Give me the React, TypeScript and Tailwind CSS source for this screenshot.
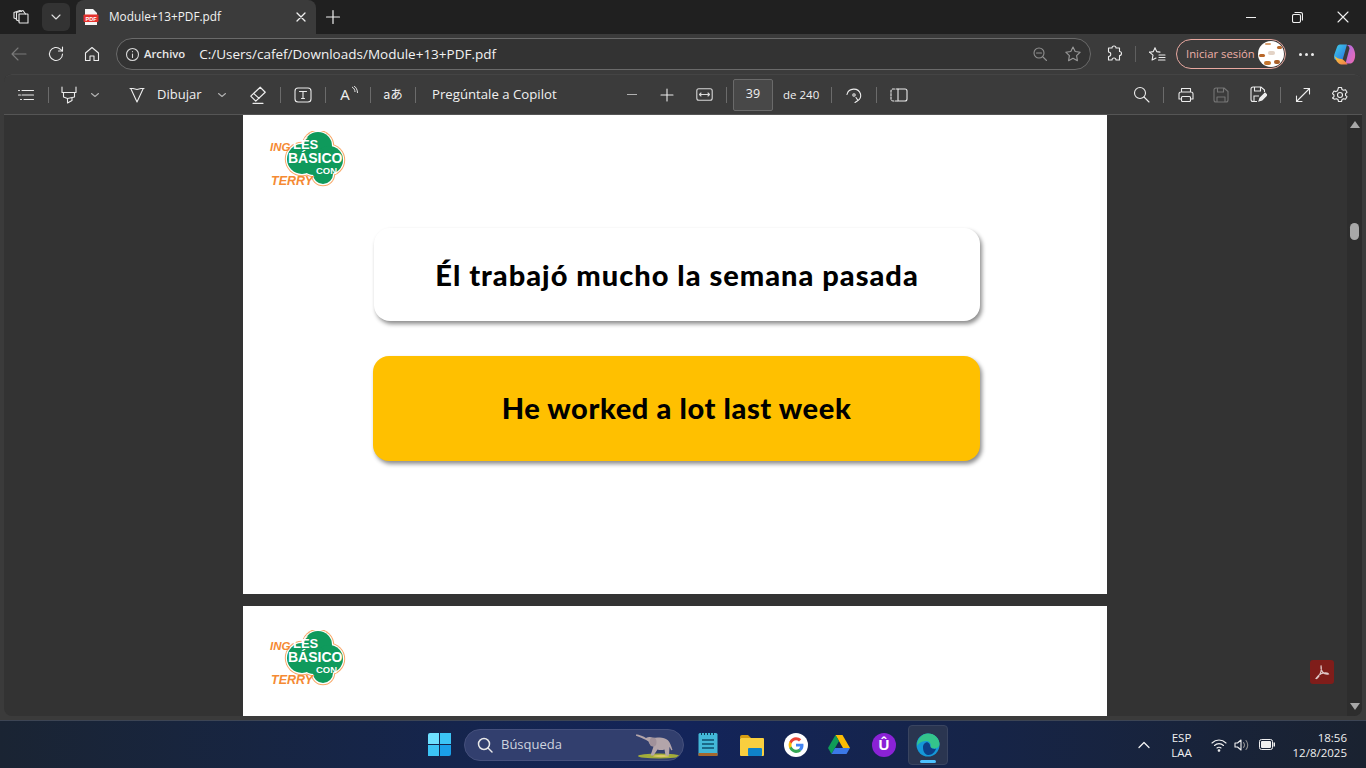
import React from "react";

const S = (p: { w?: number; h?: number; children: React.ReactNode; vb?: string; c?: string; cls?: string }) => (
  <svg width={p.w ?? 18} height={p.h ?? 18} viewBox={p.vb ?? "0 0 18 18"} fill="none" stroke={p.c ?? "#e6e6e6"} strokeWidth="1.1" strokeLinecap="round" strokeLinejoin="round" className={p.cls}>
    {p.children}
  </svg>
);

const Sep = ({ cls }: { cls: string }) => (
  <div className={`flex justify-center ${cls}`}>
    <div className="w-px h-[16px] bg-[#6b6b6b]" />
  </div>
);

const Chevron = () => (
  <S w={10} h={10} vb="0 0 10 10" c="#b0b0b0"><path d="M1.5 3.5 5 6.5l3.5-3" /></S>
);

function Logo() {
  const lobes = [
    { x: 48, y: 15, r: 14 },
    { x: 59, y: 29, r: 14 },
    { x: 53, y: 43, r: 10 },
    { x: 32, y: 28, r: 15 },
    { x: 44, y: 30, r: 14 },
  ];
  return (
    <div className="relative w-[76px] h-[58px]">
      <svg width="76" height="58" viewBox="0 0 76 58" className="absolute left-0 top-0">
        {lobes.map((l, i) => <circle key={`a${i}`} cx={l.x} cy={l.y} r={l.r + 2.2} fill="#f8a868" />)}
        {lobes.map((l, i) => <circle key={`b${i}`} cx={l.x} cy={l.y} r={l.r + 1.2} fill="#ffffff" />)}
        {lobes.map((l, i) => <circle key={`c${i}`} cx={l.x} cy={l.y} r={l.r} fill="#0f9a5c" />)}
      </svg>
      <span className="absolute left-0 top-[10px] text-[11.5px] leading-[12px] font-bold italic text-[#f58a33] font-['Liberation_Sans',sans-serif]">ING</span>
      <span className="absolute left-[23px] top-[8px] text-[13px] leading-[12px] font-bold text-white font-['Liberation_Sans',sans-serif]">LÉS</span>
      <span className="absolute left-[18px] top-[21px] text-[14px] leading-[12px] font-bold text-white font-['Liberation_Sans',sans-serif]">BÁSICO</span>
      <span className="absolute left-[46px] top-[35px] text-[9.5px] leading-[10px] font-bold text-white font-['Liberation_Sans',sans-serif]">CON</span>
      <span className="absolute left-[1px] top-[44px] text-[12.5px] leading-[13px] font-bold italic text-[#f58a33] font-['Liberation_Sans',sans-serif]">TERRY</span>
    </div>
  );
}

function Elephant() {
  return (
    <svg width="44" height="25" viewBox="0 0 44 25">
      <ellipse cx="23" cy="22" rx="21" ry="2.5" fill="#a3ad3a" />
      <ellipse cx="25" cy="22" rx="8" ry="1.2" fill="#d8c668" />
      <path d="M0 .5c3 0 8 2 10 3.500 2-1.500 5-1.500 7 0 3-.8 9-.8 13 1 3 1.500 4 4 5.500 8l1 3-1.300.2-1.700-3.500-.5 8.800h-3.500l-1-6c-2 .8-5 .8-7 0l-4 6h-3l3-9c-3-1-4.500-3-5-5-3-2-7-4-13-6z" fill="#b3a5aa" />
      <ellipse cx="17" cy="8" rx="3.500" ry="4.500" fill="#a0919a" />
    </svg>
  );
}

function Taskbar() {
  return (
    <div className="h-[48px] flex items-center bg-gradient-to-r from-[#1a2433] via-[#13245a] to-[#1a2230] relative border-t border-[#3d4554] shrink-0">
      <div className="ml-[428px] w-[23px] h-[23px] grid grid-cols-2 grid-rows-2 gap-[1px] shrink-0">
        <div className="bg-[#6ee0ff] rounded-tl-[2px]" />
        <div className="bg-[#3cc4f5]" />
        <div className="bg-[#3cc4f5]" />
        <div className="bg-[#1a9fe8] rounded-br-[2px]" />
      </div>
      <div className="ml-[13px] w-[220px] h-[32px] rounded-full bg-[#323f6e] border border-[#45507c] flex items-center relative shrink-0 overflow-hidden">
        <svg width="18" height="18" viewBox="0 0 18 18" fill="none" stroke="#e8e8e8" strokeWidth="1.5" className="ml-[11px]"><circle cx="8" cy="8" r="5.5" /><path d="M12 12l4 4" strokeLinecap="round" /></svg>
        <span className="ml-[7px] text-[13px] text-[#cfd3de] font-['Open_Sans',sans-serif]">Búsqueda</span>
        <div className="absolute right-[3px] top-[4px]"><Elephant /></div>
      </div>
      {/* notepad */}
      <div className="ml-[14px] w-[20px] shrink-0">
        <svg width="20" height="25" viewBox="0 0 20 25">
          <rect x="0.5" y="1" width="19" height="23" rx="1.5" fill="#43b7d8" />
          <rect x="0.5" y="21" width="19" height="3" fill="#a5672e" />
          <path d="M4 8h12M4 12h12M4 16h12" stroke="#0f4f6d" strokeWidth="1.5" />
          <path d="M3 2h1M6 2h1M9 2h1M12 2h1M15 2h1" stroke="#0d3c55" strokeWidth="2" />
        </svg>
      </div>
      {/* folder */}
      <div className="ml-[22px] w-[24px] shrink-0">
        <svg width="24" height="22" viewBox="0 0 24 22">
          <path d="M0 3a2 2 0 0 1 2-2h6l3 3h-11z" fill="#d79d12" />
          <rect x="0" y="4" width="24" height="18" rx="1" fill="#f9cf3f" />
          <rect x="8" y="14" width="14" height="8" rx="1" fill="#0f82c8" />
        </svg>
      </div>
      {/* google */}
      <div className="ml-[20px] w-[24px] h-[24px] rounded-full bg-white flex items-center justify-center shrink-0">
        <svg width="18" height="18" viewBox="0 0 24 24">
          <path d="M22 12.200c0-.7-.1-1.400-.2-2H12v3.900h5.600c-.2 1.300-1 2.400-2.100 3.100v2.600h3.400c2-1.800 3.100-4.500 3.100-7.600z" fill="#4285f4" />
          <path d="M12 22.500c2.800 0 5.200-.9 6.900-2.500l-3.400-2.600c-.9.600-2.100 1-3.500 1-2.700 0-5-1.800-5.800-4.300H3.200v2.700c1.700 3.400 5.100 5.700 8.800 5.700z" fill="#34a853" />
          <path d="M6.200 14.100c-.4-1.300-.4-2.800 0-4.100V7.300H3.200c-1.400 2.800-1.400 6.100 0 9z" fill="#fbbc05" />
          <path d="M12 5.600c1.500 0 2.900.5 4 1.600l3-3C17.100 2.400 14.700 1.500 12 1.500 8.300 1.500 4.900 3.700 3.200 7.300l3 2.700C7 7.400 9.300 5.600 12 5.600z" fill="#ea4335" />
        </svg>
      </div>
      {/* drive */}
      <div className="ml-[20px] w-[22px] shrink-0">
        <svg width="22" height="20" viewBox="0 0 22 20">
          <path d="M7.500 0h7l7.500 13h-7z" fill="#fbbc04" />
          <path d="M7.500 0L0 13l3.500 6 7.500-13z" fill="#0f9d58" />
          <path d="M7 13h15l-3.500 6H3.500z" fill="#3b78e7" />
        </svg>
      </div>
      {/* purple */}
      <div className="ml-[22px] w-[24px] h-[24px] rounded-full bg-[#8a22d6] flex items-center justify-center shrink-0">
        <span className="text-white font-bold text-[15px] leading-none font-['Liberation_Sans',sans-serif]">Û</span>
      </div>
      {/* edge */}
      <div className="ml-[12px] w-[40px] h-[40px] rounded-[4px] bg-[#2a3550] border border-[#394460] flex flex-col items-center justify-center relative shrink-0">
        <svg width="24" height="24" viewBox="0 0 24 24">
          <circle cx="12" cy="12" r="11.500" fill="#1598d8" />
          <path d="M12 .5C18.500 .5 23.500 5.500 23.500 11c0 3-2.500 4.500-5.500 4.500-1.500 0-3-.5-4-1.200 1.500-1.800 1-5.800-3.500-6.300C6 7.500 3 10 1 13 1 6 6 .5 12 .5z" fill="#34c48b" />
          <path d="M7 14c0-3 3-5.500 5-4.500 2 1 2 3 2.500 4.500 1 1.500 3 2.200 5.500 1.800-1 3.500-4.500 6.700-8 6.200-3.500-.5-5-4-5-8z" fill="#0c3f88" />
        </svg>
        <div className="absolute bottom-[1px] w-[16px] h-[3px] rounded-full bg-[#4cc2ff]" />
      </div>
      {/* tray */}
      <div className="ml-auto flex items-center text-[#f0f0f0] font-['Open_Sans',sans-serif] shrink-0">
        <S w={12} h={8} vb="0 0 12 8" c="#f0f0f0"><path d="M1 6.500 6 1.500l5 5" strokeWidth="1.300" /></S>
        <div className="ml-[20px] w-[24px] flex flex-col items-center text-[11.5px] leading-[15px]">
          <span>ESP</span>
          <span>LAA</span>
        </div>
        <div className="ml-[17px]">
          <S w={16} h={14} vb="0 0 16 14" c="#f0f0f0"><path d="M1 5c4-4 10-4 14 0M3.500 7.500c2.500-2.500 6.500-2.500 9 0M6 10c1-1 3-1 4 0" /><circle cx="8" cy="12.500" r=".8" fill="#f0f0f0" /></S>
        </div>
        <div className="ml-[7px]">
          <S w={16} h={14} vb="0 0 16 14" c="#f0f0f0"><path d="M1 5h2.500L7 2v10L3.500 9H1z" /><path d="M9.500 4.500c1.200 1.400 1.200 3.600 0 5M12 2.500c2.300 2.500 2.300 6.500 0 9" stroke="#8d8d8d" /></S>
        </div>
        <div className="ml-[9px]">
          <svg width="16" height="11" viewBox="0 0 16 11" fill="none"><rect x=".5" y=".5" width="13" height="10" rx="2" stroke="#f0f0f0" /><rect x="2" y="2" width="10" height="7" rx="1" fill="#f0f0f0" /><rect x="14.500" y="3.500" width="1.500" height="4" fill="#f0f0f0" /></svg>
        </div>
        <div className="ml-[18px] mr-[19px] flex flex-col items-end text-[11.5px] leading-[15px]">
          <span>18:56</span>
          <span>12/8/2025</span>
        </div>
      </div>
    </div>
  );
}

export default function App() {
  return (
    <div className="w-[1366px] h-[768px] flex flex-col overflow-hidden bg-[#3b3b3b] font-['Open_Sans',sans-serif]">
      {/* Tab strip */}
      <div className="h-[34px] bg-[#202020] flex items-center shrink-0 relative">
        <div className="w-[42px] flex justify-center">
          <S w={18} h={18}><path d="M7 6h8.500a.5.5 0 0 1 .5.500V15H8a1 1 0 0 1-1-1z" /><path d="M7 13 4.500 12V4.500L11 2.500l2.500 3.500" /><path d="M4.500 11 2 10V4.500L8 2.500l1.500 1" /></S>
        </div>
        <div className="w-[28px] h-[28px] rounded-[6px] bg-[#333333] flex items-center justify-center">
          <S w={12} h={12} vb="0 0 12 12" c="#e0e0e0"><path d="M2 4l4 4 4-4" /></S>
        </div>
        <div className="ml-[6px] w-[240px] h-[34px] rounded-t-[8px] bg-[#3b3b3b] flex items-center pl-[7px]">
          <svg width="16" height="16" viewBox="0 0 16 16">
            <path d="M2 0h8l4 4v12H2z" fill="#f5f5f5" />
            <rect x="0.500" y="5.500" width="15" height="7.500" rx="1" fill="#e5322d" />
            <text x="8" y="11.500" textAnchor="middle" fontSize="5.500" fontWeight="700" fill="#fff" fontFamily="Liberation Sans">PDF</text>
          </svg>
          <span className="ml-[10px] text-[11.8px] text-[#f2f2f2] leading-none">Module+13+PDF.pdf</span>
          <div className="ml-auto mr-[9px]">
            <S w={12} h={12} vb="0 0 12 12" c="#f0f0f0"><path d="M2 2l8 8M10 2l-8 8" strokeWidth="1.300" /></S>
          </div>
        </div>
        <div className="ml-[9px]">
          <S w={16} h={16} vb="0 0 16 16" c="#f0f0f0"><path d="M8 1.500v13M1.500 8h13" strokeWidth="1.200" /></S>
        </div>
        <div className="ml-auto flex items-center">
          <div className="w-[46px] flex justify-center"><div className="w-[10px] h-px bg-[#f0f0f0]" /></div>
          <div className="w-[46px] flex justify-center">
            <S w={11} h={11} vb="0 0 11 11" c="#f0f0f0"><rect x=".5" y="2.500" width="8" height="8" rx="1.500" /><path d="M3 .5h5.500a2 2 0 0 1 2 2V8" /></S>
          </div>
          <div className="w-[46px] flex justify-center">
            <S w={12} h={12} vb="0 0 12 12" c="#f0f0f0"><path d="M1 1l10 10M11 1L1 11" /></S>
          </div>
        </div>
      </div>

      {/* Address bar */}
      <div className="h-[40px] flex items-center shrink-0">
        <div className="w-[38px] flex justify-center">
          <S w={18} h={18} c="#7a7a7a"><path d="M2 9h14M8 3 2 9l6 6" /></S>
        </div>
        <div className="w-[36px] flex justify-center">
          <S w={18} h={18} c="#ececec"><path d="M15.500 9a6.500 6.500 0 1 1-2-4.700L15.500 6" /><path d="M15.500 2v4h-4" /></S>
        </div>
        <div className="w-[36px] flex justify-center">
          <S w={18} h={18} c="#ececec"><path d="M2.500 8 9 2.500 15.500 8v7.500H11v-4.500H7v4.500H2.500z" /></S>
        </div>
        <div className="ml-[6px] w-[975px] h-[32px] rounded-full border border-[#6a6a6a] bg-[#333333] flex items-center">
          <div className="ml-[8px]">
            <S w={15} h={15} vb="0 0 15 15" c="#d8d8d8"><circle cx="7.500" cy="7.500" r="6" /><path d="M7.500 7v3.500M7.500 4.500v.3" /></S>
          </div>
          <span className="ml-[4px] text-[11.3px] font-semibold text-[#e8e8e8] leading-none">Archivo</span>
          <span className="ml-[14px] pt-[1px] text-[13.5px] text-[#f2f2f2] leading-none">C:/Users/cafef/Downloads/Module+13+PDF.pdf</span>
          <div className="ml-auto flex items-center mr-[8px]">
            <S w={16} h={16} vb="0 0 16 16" c="#8f8f8f"><circle cx="7" cy="7" r="5" /><path d="M4.500 7h5M11 11l3.500 3.500" /></S>
            <div className="ml-[16px]">
              <S w={18} h={18} c="#9a9a9a"><path d="m9 2 2.200 4.500 5 .7-3.600 3.500.8 5L9 13.300l-4.400 2.400.8-5L1.800 7.200l5-.7z" /></S>
            </div>
          </div>
        </div>
        <div className="ml-[14px]">
          <S w={18} h={18} c="#ececec"><path d="M7 3a2 2 0 0 1 4 0h3.500v3.500a2 2 0 0 1 0 4V15H11a2 2 0 0 0-4 0H3.500v-3.500a2.200 2.200 0 0 0 0-4.500V3z" /></S>
        </div>
        <div className="ml-[12px] w-px h-[16px] bg-[#5f5f5f]" />
        <div className="ml-[12px]">
          <S w={18} h={18} c="#ececec"><path d="m7 3 1.700 3.600 3.300.5M1.500 7.200l3.500 3-.9 4.800L8 13" /><path d="M1.500 7.200 5.300 6.600 7 3M11 10h6M11 12.500h6M10.500 15h6.500" /></S>
        </div>
        <div className="ml-[10px] w-[110px] h-[30px] rounded-full border border-[#e8a8a0] flex items-center">
          <span className="ml-[9px] text-[11.3px] text-[#efb0a8] leading-none whitespace-nowrap">Iniciar sesión</span>
          <div className="ml-auto mr-[1px] w-[26px] h-[26px] rounded-full bg-white relative overflow-hidden">
            <div className="absolute left-[1px] top-[13px] w-[6px] h-[3px] rounded-full bg-[#b8672a]" />
            <div className="absolute left-[6px] top-[20px] w-[7px] h-[4px] rounded-full bg-[#c4762f]" />
            <div className="absolute left-[16px] top-[19px] w-[6px] h-[4px] rounded-full bg-[#a9602a]" />
            <div className="absolute left-[19px] top-[5px] w-[5px] h-[3px] rounded-full bg-[#b8672a]" />
            <div className="absolute left-[7px] top-[2px] w-[6px] h-[2px] rounded-full bg-[#d8a070]" />
            <div className="absolute left-[10px] top-[10px] w-[7px] h-[4px] rounded-full bg-[#e3d3c6]" />
          </div>
        </div>
        <div className="ml-[13px] flex gap-[3px]">
          <div className="w-[3px] h-[3px] rounded-full bg-[#ececec]" />
          <div className="w-[3px] h-[3px] rounded-full bg-[#ececec]" />
          <div className="w-[3px] h-[3px] rounded-full bg-[#ececec]" />
        </div>
        <div className="ml-[19px]">
          <svg width="23" height="23" viewBox="0 0 23 23">
            <defs>
              <linearGradient id="cpa" x1="0" y1="0" x2="1" y2="1"><stop offset="0" stopColor="#3fd0e8" /><stop offset="1" stopColor="#2a6fe1" /></linearGradient>
              <linearGradient id="cpb" x1="0" y1="0" x2="1" y2="1"><stop offset="0" stopColor="#a86de8" /><stop offset="1" stopColor="#f06ab0" /></linearGradient>
              <linearGradient id="cpc" x1="0" y1="0" x2="1" y2="1"><stop offset="0" stopColor="#f6d23c" /><stop offset="1" stopColor="#f0784c" /></linearGradient>
            </defs>
            <path d="M7 1.500h7L9.500 17H3C1.200 17 .5 14 1.500 11L4 4c.5-1.500 1.500-2.500 3-2.500z" fill="url(#cpa)" />
            <path d="M13 2h3c3 0 5 3 6 8 .5 3 0 9-4 10.500h-5.500l4-15c-.3-2-1.500-3.500-3.500-3.500z" fill="url(#cpb)" />
            <path d="M1.500 13c1 3 3 8.500 7 8.500h6c-1-2-4-5-6-5.500-3 0-5-1-7-3z" fill="url(#cpc)" />
          </svg>
        </div>
      </div>

      {/* Panel */}
      <div className="flex-1 mx-[4px] mb-[4px] rounded-[8px] overflow-hidden flex flex-col bg-[#333333] min-h-0">
        {/* PDF toolbar */}
        <div className="h-[41px] bg-[#3b3b3b] border-b border-[#555555] border-t border-t-[#444444] rounded-t-[8px] flex items-center shrink-0 text-[#f0f0f0]">
          <div className="ml-[8px] w-[28px] flex justify-center">
            <S w={18} h={14} vb="0 0 18 14" c="#ececec"><path d="M5 2.500h11.500M5 7h11.500M7 11.500h9.500M1.500 2.500h1M1.500 7h2M3.500 11.500h1" strokeWidth="1.100" /></S>
          </div>
          <Sep cls="w-[16px]" />
          <div className="w-[26px] flex justify-center">
            <S w={18} h={18} c="#ececec"><path d="M2 1v5.500h14V1M3.500 6.500V11l4 1.500 7-1.500V6.500M7.500 12.500V17l4.500-2.500V11.700" /></S>
          </div>
          <div className="w-[26px] flex justify-center"><Chevron /></div>
          <div className="ml-[9px] w-[40px] flex justify-center">
            <S w={18} h={18} c="#ececec"><path d="M2 2.500h3l4 1 4-1h3M3 3 9 16l6-13" /></S>
          </div>
          <span className="w-[45px] text-[13px] leading-none whitespace-nowrap">Dibujar</span>
          <div className="w-[40px] flex justify-center"><Chevron /></div>
          <div className="w-[32px] flex justify-center">
            <S w={20} h={20} vb="0 0 18 18" c="#ececec"><path d="M11 2 2.500 10l4.500 4.500 8.500-8zM5 7.500l5 4.500M4.500 16.500h9" /></S>
          </div>
          <Sep cls="w-[12px]" />
          <div className="w-[34px] flex justify-center">
            <S w={18} h={16} vb="0 0 18 16" c="#ececec"><rect x="1" y="1" width="16" height="14" rx="3" /><path d="M5.500 4.500h7M9 4.500v7M7.500 11.500h3" /></S>
          </div>
          <Sep cls="w-[10px]" />
          <div className="w-[36px] flex justify-center">
            <span className="relative -ml-[6px] text-[15px] leading-none">A
              <svg width="7" height="9" viewBox="0 0 7 9" fill="none" stroke="#e6e6e6" strokeWidth="1" className="absolute left-[11px] top-[-1px]"><path d="M1 1c2 1 3 3 3 5M3 0c2 1 3.500 4 3.500 7" /></svg>
            </span>
          </div>
          <Sep cls="w-[8px]" />
          <div className="w-[38px] flex justify-center">
            <span className="text-[12.5px] leading-none font-['Noto_Sans_CJK_JP','Open_Sans',sans-serif]">aあ</span>
          </div>
          <Sep cls="w-[6px]" />
          <span className="ml-[14px] w-[126px] text-[13.2px] leading-none whitespace-nowrap">Pregúntale a Copilot</span>
          <div className="ml-[58px] w-[32px] flex justify-center">
            <div className="w-[10px] h-[1.5px] bg-[#b0b0b0]" />
          </div>
          <div className="ml-[3px] w-[32px] flex justify-center">
            <S w={14} h={14} vb="0 0 14 14" c="#ececec"><path d="M7 1v12M1 7h12" /></S>
          </div>
          <div className="ml-[5px] w-[32px] flex justify-center">
            <S w={17} h={13} vb="0 0 17 13" c="#d8d8d8"><rect x=".8" y=".8" width="15.400" height="11.400" rx="2" /><path d="M3.500 6.500h10M5 5 3.500 6.500 5 8M12 5l1.500 1.500L12 8" /></S>
          </div>
          <Sep cls="w-[12px]" />
          <div className="ml-[1px] w-[40px] h-[32px] rounded-[2px] border border-[#6a6a6a] bg-[#484848] flex items-center justify-center text-[12.5px]">39</div>
          <span className="ml-[10px] w-[36px] text-[11.5px] leading-none whitespace-nowrap">de 240</span>
          <Sep cls="ml-[6px] w-[12px]" />
          <div className="w-[34px] flex justify-center">
            <S w={18} h={18} c="#ececec"><path d="M2 8.500A7 7 0 0 1 15.500 8c.6 2.500-.3 5-2.500 6.500M10 16.500l3-2-2-3" /><circle cx="9" cy="9" r="1.200" /></S>
          </div>
          <Sep cls="w-[10px]" />
          <div className="w-[36px] flex justify-center">
            <S w={18} h={14} vb="0 0 18 14" c="#ececec"><path d="M8 1H3a2 2 0 0 0-2 2v8a2 2 0 0 0 2 2h5" strokeDasharray="2 1.500" /><path d="M8 1h7a2 2 0 0 1 2 2v8a2 2 0 0 1-2 2H8zM8 1v12" /></S>
          </div>
          <div className="ml-auto flex items-center mr-[4px]">
            <div className="w-[32px] flex justify-center">
              <S w={17} h={17} vb="0 0 17 17" c="#ececec"><circle cx="7" cy="7" r="5.500" /><path d="M11 11l5 5" /></S>
            </div>
            <Sep cls="w-[12px]" />
            <div className="w-[34px] flex justify-center">
              <S w={18} h={18} c="#ececec"><path d="M4.500 6V2.500h9V6M4.500 13H2V8a2 2 0 0 1 2-2h10a2 2 0 0 1 2 2v5h-2.500" /><rect x="4.500" y="10.500" width="9" height="5" rx="1" /></S>
            </div>
            <div className="ml-[1px] w-[34px] flex justify-center">
              <S w={16} h={16} vb="0 0 16 16" c="#757575"><path d="M1 3a2 2 0 0 1 2-2h8l4 3.500V13a2 2 0 0 1-2 2H3a2 2 0 0 1-2-2zM4.500 1v4h6V1M4 15v-5h8v5" /></S>
            </div>
            <div className="ml-[3px] w-[34px] flex justify-center">
              <svg width="17" height="17" viewBox="0 0 17 17" fill="none" stroke="#ececec" strokeWidth="1.100"><path d="M7 15.500H3a2 2 0 0 1-2-2V3a2 2 0 0 1 2-2h8l3.500 3v2M4.500 1v4h6V1M4 15v-5h5" /><path d="m9 15 1-3 5-5 2 2-5 5z" fill="#ececec" /></svg>
            </div>
            <Sep cls="w-[10px]" />
            <div className="ml-[1px] w-[34px] flex justify-center">
              <S w={16} h={16} vb="0 0 16 16" c="#ececec"><path d="M1.500 9v5.500H7M9 1.500h5.500V7M14.500 1.500l-13 13" /></S>
            </div>
            <div className="ml-[2px] w-[36px] flex justify-center">
              <S w={18} h={18} c="#ececec"><circle cx="9" cy="9" r="2.500" /><path d="M7.500 1.500h3l.5 2 1.500.8 2-.6 1.500 2.600-1.500 1.400v1.600l1.500 1.400-1.500 2.600-2-.6-1.500.8-.5 2h-3l-.5-2-1.500-.8-2 .6L1.500 12l1.500-1.400V9L1.500 7.600 3 5l2 .6L6.500 4.800z" /></S>
            </div>
          </div>
        </div>

        {/* Document view */}
        <div className="flex-1 flex min-h-0 relative">
          <div className="flex-1 flex flex-col items-start min-w-0 pl-[239px] overflow-hidden">
            <div className="w-[864px] h-[479px] shrink-0 bg-white flex flex-col relative">
              <div className="ml-[27px] mt-[16px]"><Logo /></div>
              <div className="ml-[131px] mt-[39px] w-[606px] h-[93px] rounded-[16px] bg-white shadow-[2px_3px_4px_rgba(0,0,0,0.45)] flex items-center justify-center">
                <span className="text-[29px] font-black tracking-[1px] text-black leading-none font-['Lato',sans-serif] whitespace-nowrap">Él trabajó mucho la semana pasada</span>
              </div>
              <div className="ml-[130px] mt-[35px] w-[607px] h-[105px] rounded-[16px] bg-[#ffc000] shadow-[2px_3px_4px_rgba(0,0,0,0.45)] flex items-center justify-center pb-[2px]">
                <span className="text-[29px] font-black tracking-[0.6px] text-black leading-none font-['Lato',sans-serif] whitespace-nowrap">He worked a lot last week</span>
              </div>
            </div>
            <div className="mt-[12px] w-[864px] flex-1 shrink-0 bg-white pt-[24px]">
              <div className="ml-[27px]"><Logo /></div>
            </div>
          </div>
          <div className="w-[15px] bg-[#2d2d2d] flex flex-col items-center justify-between py-[6px] shrink-0 relative">
            <div className="w-0 h-0 border-x-[5px] border-x-transparent border-b-[7px] border-b-[#a8a8a8]" />
            <div className="absolute top-[108px] w-[9px] h-[17px] rounded-full bg-[#a8a8a8]" />
            <div className="w-0 h-0 border-x-[5px] border-x-transparent border-t-[7px] border-t-[#a8a8a8]" />
          </div>
          <div className="absolute right-[28px] bottom-[32px] w-[24px] h-[24px] rounded-[3px] bg-[#7f1d1a] flex items-center justify-center">
            <svg width="16" height="16" viewBox="0 0 16 16" fill="none" stroke="#e0c8c8" strokeWidth="1.200"><path d="M7 1.500c-.5 3 .5 5 1.500 6.500 1.500 1.500 4 2.500 6 2-.5-1.500-4-1.500-7-.5-2 1-4.500 3-5.500 5 1.500.5 4-3.500 5-7 .3-2 .5-4.500 0-6z" /></svg>
          </div>
        </div>
      </div>

      <Taskbar />
    </div>
  );
}
